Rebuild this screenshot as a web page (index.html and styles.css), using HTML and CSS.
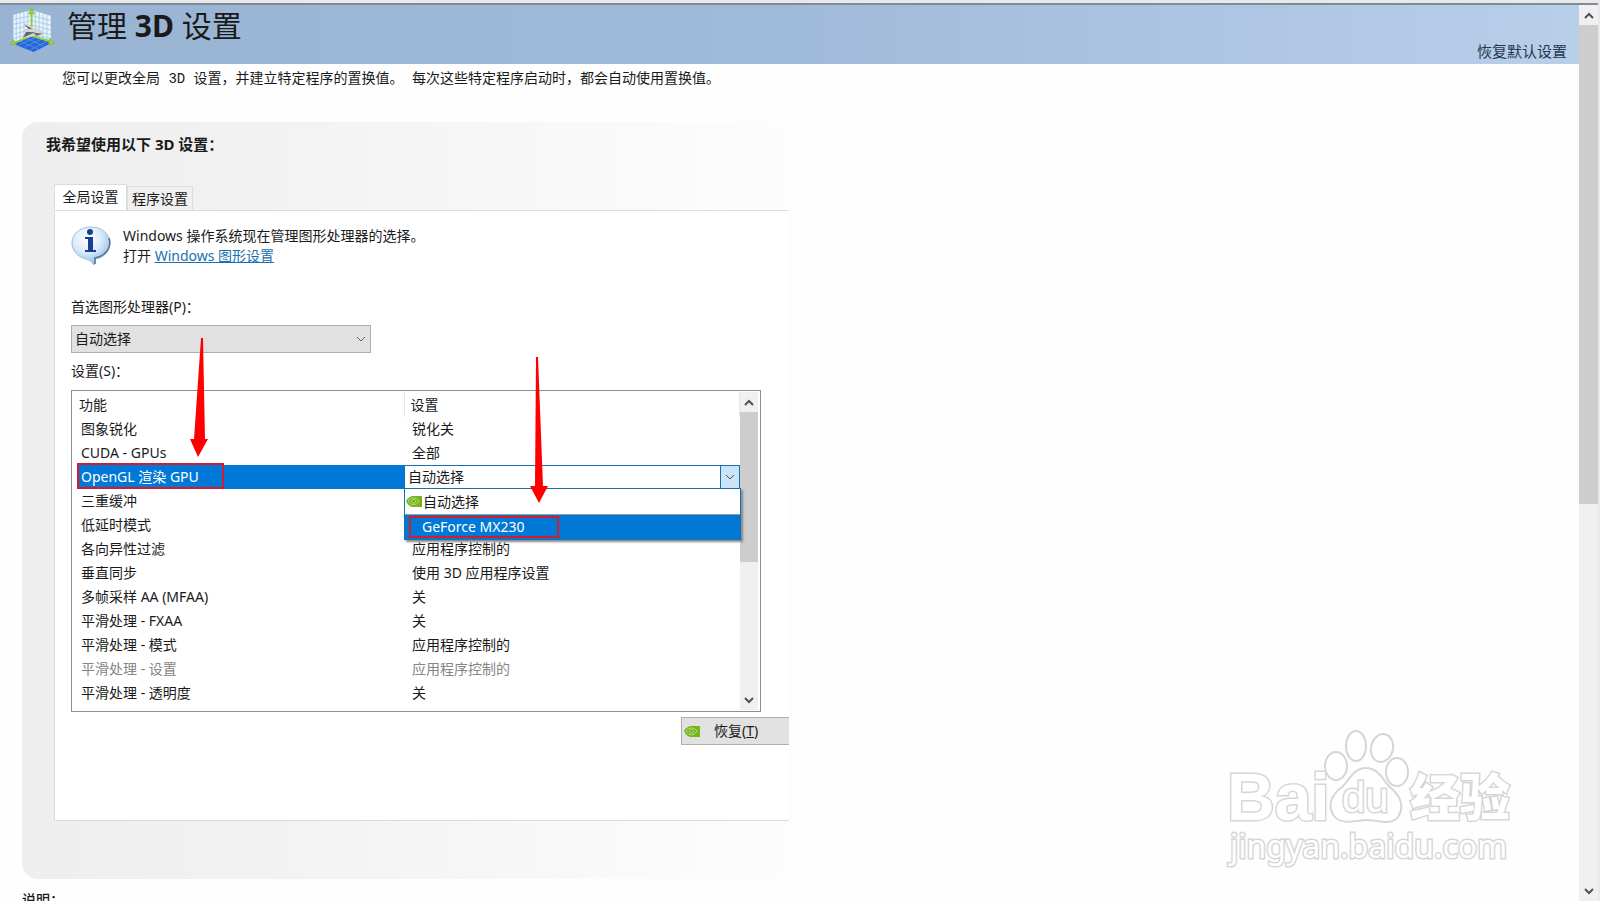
FILE: index.html
```
<!DOCTYPE html>

<html lang="zh-CN">
  <head>
    <meta charset="UTF-8" />
    <meta name="viewport" content="width=device-width, initial-scale=1.0" />
    <title>管理 3D 设置</title>

    <link rel="stylesheet" href="styles.css">
  </head>

  <body>
    <div class="window">
      <div class="page">
        <header class="header">
          <svg class="header__icon" viewBox="0 0 48 46" aria-hidden="true">
            <path d="M3 7 L22 2 V31 L3 36z M22 2 L42 8 V36 L22 31z" fill="#e9f3fb" />
            <path d="M6 6v29M10 5v29M14 4v29M18 3v29M26 3v29M30 4v29M34 6v29M38 7v29M3 12l19-4 20 5M3 17l19-4 20 5M3 22l19-4 20 5M3 27l19-4 20 5M3 32l19-5 20 5" fill="none" stroke="#a9cde6" />
            <path d="M2 37 L22 28 L44 36 L24 46z" fill="#2468d8" />
            <path d="M8 39l20-9M14 41l20-9M20 44l18-9M9 34l20 9M15 31l20 9" stroke="#4f8cea" />
            <path d="M22 30V4M22 29L3 37M22 29l20 6" fill="none" stroke="#8fce3c" stroke-width="2" />
            <path d="M22 0l3 6h-6zM0 38l3-5 3 5zM41 32l5 5-6 1z" fill="#9bd62f" stroke="#7fb84a" />
            <path d="M12 14l12 7c6 0 9 3 11 6l-9 2-15 3 7-6-6-4h6z" fill="#d0d4d8" />
            <path d="M16 25l10 0-13 6zM24 26l10 1-7 2zM14 17l9 5-4 0z" fill="#63686d" />
          </svg>
          <h1 class="header__title">管理 <b>3D</b> 设置</h1>
          <a class="header__restore" href="#restore">恢复默认设置</a>
        </header>

        <p class="intro">您可以更改全局 3D 设置，并建立特定程序的置换值。 每次这些特定程序启动时，都会自动使用置换值。</p>

        <main class="group">
          <h2 class="group__title">我希望使用以下 3D 设置：</h2>

          <div class="tabs" role="tablist">
            <button class="tab tab--active" role="tab" aria-selected="true">全局设置</button>
            <button class="tab" role="tab" aria-selected="false">程序设置</button>
          </div>

          <section class="panel">
            <div class="notice">
              <svg class="notice__icon" viewBox="0 0 40 40" aria-hidden="true">
                <defs>
                  <radialGradient id="bubble" cx="0.4" cy="0.3" r="0.75">
                    <stop offset="0" stop-color="#fff" />
                    <stop offset="0.5" stop-color="#d9ebfb" />
                    <stop offset="1" stop-color="#86b4e3" />
                  </radialGradient>
                </defs>
                <path d="M20 1C9 1 1 8 1 17c0 8 6 14 14 16 4 1 6 3 8 6 1-2 1-4 1-6 9-1 15-8 15-16C39 8 31 1 20 1z" fill="url(#bubble)" stroke="#a9bdd2" />
                <path d="M38 12c3 9-3 18-14 20v6" fill="none" stroke="#53718f" stroke-width="1.5" />
                <circle cx="19" cy="6" r="3" fill="#153f91" />
                <path d="M14 11h8v13h3v2H14v-2h3V13h-3z" fill="#153f91" />
              </svg>
              <p class="notice__text">
                Windows 操作系统现在管理图形处理器的选择。<br />
                打开 <a class="link" href="#graphics">Windows 图形设置</a>
              </p>
            </div>

            <label class="label" for="gpu">首选图形处理器(P)：</label>
            <div class="select-box">
              <select id="gpu" class="select">
                <option>自动选择</option>
              </select>
              <svg class="select-box__arrow" viewBox="0 0 10 6" aria-hidden="true"><path d="M1 1l4 4 4-4" /></svg>
            </div>

            <div class="label label--list" id="features-label">设置(S)：</div>
            <div class="list">
              <table class="features" aria-labelledby="features-label">
                <thead>
                  <tr><th>功能</th><th>设置</th></tr>
                </thead>
                <tbody>
                  <tr><td>图象锐化</td><td>锐化关</td></tr>
                  <tr><td>CUDA - GPUs</td><td>全部</td></tr>
                  <tr class="features__selected">
                    <td><label for="opengl">OpenGL 渲染 GPU</label><span class="mark mark--feature"></span></td>
                    <td>
                      <div class="combo">
                        <select id="opengl" class="combo__select">
                          <option>自动选择</option>
                          <option>GeForce MX230</option>
                        </select>
                        <span class="combo__arrow">
                          <svg viewBox="0 0 10 6" aria-hidden="true"><path d="M1 1l4 4 4-4" /></svg>
                        </span>
                        <ul class="menu" role="listbox" aria-label="OpenGL 渲染 GPU">
                          <li class="menu__item" role="option">
                            <svg class="nv" viewBox="0 0 16 11" aria-hidden="true">
                              <path d="M6 0h10v11H6C3 10 1 8 0 5 1 3 3 1 6 0z" fill="#76b51b" />
                              <path d="M2 5c3-4 8-4 11 0-3 5-8 5-11 0zM5 5c1-2 4-2 5 0-1 3-4 3-5 0z" fill="none" stroke="#b5da80" />
                            </svg>
                            自动选择
                          </li>
                          <li class="menu__item menu__item--active" role="option" aria-selected="true">
                            GeForce MX230
                            <span class="mark mark--option"></span>
                          </li>
                        </ul>
                      </div>
                    </td>
                  </tr>
                  <tr><td>三重缓冲</td><td></td></tr>
                  <tr><td>低延时模式</td><td></td></tr>
                  <tr><td>各向异性过滤</td><td>应用程序控制的</td></tr>
                  <tr><td>垂直同步</td><td>使用 3D 应用程序设置</td></tr>
                  <tr><td>多帧采样 AA (MFAA)</td><td>关</td></tr>
                  <tr><td>平滑处理 - FXAA</td><td>关</td></tr>
                  <tr><td>平滑处理 - 模式</td><td>应用程序控制的</td></tr>
                  <tr class="features__disabled"><td>平滑处理 - 设置</td><td>应用程序控制的</td></tr>
                  <tr><td>平滑处理 - 透明度</td><td>关</td></tr>
                </tbody>
              </table>
              <div class="scrollbar">
                <button class="scrollbar__button" aria-label="向上"><svg viewBox="0 0 10 7"><path d="M1 6l4-4 4 4" /></svg></button>
                <div class="scrollbar__track"><div class="scrollbar__thumb scrollbar__thumb--list"></div></div>
                <button class="scrollbar__button" aria-label="向下"><svg viewBox="0 0 10 7"><path d="M1 1l4 4 4-4" /></svg></button>
              </div>
            </div>

            <button class="restore">
              <svg class="nv" viewBox="0 0 16 11" aria-hidden="true">
                <path d="M6 0h10v11H6C3 10 1 8 0 5 1 3 3 1 6 0z" fill="#76b51b" />
                <path d="M2 5c3-4 8-4 11 0-3 5-8 5-11 0zM5 5c1-2 4-2 5 0-1 3-4 3-5 0z" fill="none" stroke="#b5da80" />
              </svg>
              <span>恢复(<u>T</u>)</span>
            </button>

            <svg class="arrows" viewBox="0 0 735 611" aria-hidden="true">
              <path d="M146 127h2l2 101h3l-10 18-8-18h4z" />
              <path d="M481 146h2l5 129h5l-9 17-9-17h5z" />
            </svg>
          </section>
        </main>

        <h2 class="description">说明：</h2>

        <svg class="watermark" viewBox="0 0 290 140" role="img" aria-label="Baidu 经验">
          <text class="watermark__latin" x="0" y="91">Bai</text>
          <ellipse cx="109" cy="37" rx="11" ry="14" />
          <ellipse cx="129" cy="17" rx="10" ry="15" />
          <ellipse cx="155" cy="19" rx="11" ry="14" transform="rotate(12 155 19)" />
          <ellipse cx="170" cy="43" rx="11" ry="14" />
          <path d="M139 39c-13 0-17 13-24 19-11 8-15 19-8 29 8 10 22 4 33 4s24 6 31-3c7-11 2-21-7-29-8-7-12-20-25-20z" />
          <text class="watermark__du" x="115" y="83">du</text>
          <text class="watermark__cjk" x="183" y="87">经验</text>
          <text class="watermark__url" x="3" y="129">jingyan.baidu.com</text>
        </svg>
      </div>

      <div class="scrollbar scrollbar--page">
        <button class="scrollbar__button" aria-label="向上"><svg viewBox="0 0 10 7"><path d="M1 6l4-4 4 4" /></svg></button>
        <div class="scrollbar__track"><div class="scrollbar__thumb scrollbar__thumb--page"></div></div>
        <button class="scrollbar__button" aria-label="向下"><svg viewBox="0 0 10 7"><path d="M1 1l4 4 4-4" /></svg></button>
      </div>
    </div>
  </body>
</html>
```

FILE: styles.css
```
:root {
  --color-main: #1a1a1a;
  --color-disabled: #858585;
  --color-select: #0078d7;
  --color-link: #1a70b0;
  --color-mark: #d01c2c;
  --color-arrow: #f00;
  --color-line: #dcdcdc;
  --color-track: #f0f0f0;
  --color-thumb: #cdcdcd;

  --font-ui: "Noto Sans", "Noto Sans CJK SC", sans-serif;
  --font-song: "Liberation Mono", "Noto Sans CJK SC", monospace;
}

* {
  box-sizing: border-box;
  margin: 0;
  padding: 0;
}

body {
  background-color: #fefefe;
  color: var(--color-main);
  font-family: var(--font-ui);
  font-size: 14px;
  line-height: 20px;
}

button,
select {
  font: inherit;
  color: inherit;
  border-radius: 0;
}

.window {
  display: flex;
  height: 100vh;
  overflow: hidden;
  border-top: 3px solid #e9e9e9;
  border-right: 2px solid #e9e9e9;
}

.page {
  flex: 1;
  min-width: 0;
  position: relative;
  overflow: hidden;
}

/* header */

.header {
  display: flex;
  align-items: flex-start;
  height: 61px;
  padding: 3px 12px 0 10px;
  border-top: 2px solid #7f8b99;
  background: linear-gradient(to right, #99b3d2, #a0bad9 50%, #b8cfea);
}

.header__icon {
  width: 47px;
  height: 44px;
}

.header__title {
  flex: 1;
  margin-left: 10px;
  font-size: 30px;
  font-weight: 400;
  line-height: 36px;
}

.header__restore {
  align-self: flex-end;
  margin-bottom: 3px;
  color: #26384e;
  font-size: 15px;
  text-decoration: none;
}

.intro {
  padding: 5px 0 0 62px;
  font-family: var(--font-song);
}

/* settings group */

.group {
  max-width: 808px;
  margin: 33px 0 0 22px;
  padding: 12px 0 58px 32px;
  border-radius: 16px;
  background: linear-gradient(to right, #eee, #f2f2f2 30%, #fefefe);
}

.group__title {
  margin-left: -8px;
  font-size: 15px;
  font-weight: 700;
}

.tabs {
  display: flex;
  align-items: flex-end;
  margin-top: 30px;
}

.tab {
  height: 24px;
  padding: 0 4px;
  border: 1px solid var(--color-line);
  border-bottom: none;
  background-color: var(--color-track);
}

.tab--active {
  position: relative;
  height: 27px;
  width: 73px;
  margin-bottom: -1px;
  padding-bottom: 3px;
  background-color: #fff;
}

.panel {
  position: relative;
  max-width: 735px;
  padding: 15px 0 75px 16px;
  border: 1px solid var(--color-line);
  border-right: none;
  background-color: #fff;
}

.notice {
  display: flex;
  gap: 12px;
}

.notice__icon {
  width: 40px;
  height: 40px;
}

.link {
  color: var(--color-link);
}

.label {
  display: block;
  margin-top: 31px;
}

.select-box {
  position: relative;
  width: 300px;
  margin-top: 8px;
}

.select {
  display: block;
  width: 100%;
  height: 28px;
  padding: 0 3px;
  border: 1px solid #adadad;
  background-color: #e1e1e1;
  appearance: none;
}

.select-box__arrow {
  position: absolute;
  top: 11px;
  right: 5px;
  width: 10px;
  height: 6px;
  fill: none;
  stroke: #606060;
}

.label--list {
  margin-top: 8px;
}

.list {
  display: flex;
  width: 690px;
  height: 322px;
  margin-top: 9px;
  padding: 1px 2px 1px 5px;
  border: 1px solid #8b8f94;
}

.features {
  flex: 1;
  align-self: flex-start;
  table-layout: fixed;
  border-collapse: collapse;
  text-align: left;
}

.features th {
  height: 25px;
  padding: 0 0 0 2px;
  border-right: 1px solid #e5e5e5;
  font-weight: 400;
}

.features th:first-child {
  width: 327px;
}

.features th + th {
  padding-left: 6px;
}

.features td {
  position: relative;
  height: 24px;
  padding-left: 4px;
}

.features td + td {
  padding-left: 8px;
}

.features__selected td {
  background-color: var(--color-select);
  color: #fff;
}

.features__selected td + td {
  padding: 0;
}

.features__disabled {
  color: var(--color-disabled);
}

.combo {
  display: flex;
  position: relative;
  height: 24px;
  border: 1px solid #1a6fae;
  background-color: #fff;
  color: var(--color-main);
}

.combo__select {
  flex: 1;
  padding-left: 3px;
  border: none;
  background-color: #fff;
  appearance: none;
}

.combo__arrow {
  display: flex;
  align-items: center;
  justify-content: center;
  width: 19px;
  border-left: 1px solid #1a6fae;
  background-color: #cce4f7;
}

.combo__arrow svg {
  width: 10px;
  height: 6px;
  fill: none;
  stroke: #505050;
}

.menu {
  position: absolute;
  z-index: 1;
  top: 22px;
  left: -1px;
  right: -2px;
  border: 1px solid #1a6fae;
  background-color: #fff;
  box-shadow: 2px 2px 2px #888;
  list-style: none;
}

.menu__item {
  display: flex;
  align-items: center;
  gap: 1px;
  height: 25px;
  padding-left: 1px;
}

.menu__item--active {
  position: relative;
  padding-left: 17px;
  border-top: 1px solid #999;
  background-color: var(--color-select);
  color: #fff;
}

.nv {
  width: 16px;
  height: 11px;
}

/* red annotations */

.mark {
  position: absolute;
  border: 2px solid var(--color-mark);
}

.mark--feature {
  top: -2px;
  left: 0;
  width: 147px;
  height: 26px;
}

.mark--option {
  top: 1px;
  left: 4px;
  width: 150px;
  height: 22px;
}

.arrows {
  position: absolute;
  z-index: 2;
  top: 0;
  left: 0;
  width: 735px;
  height: 611px;
  fill: var(--color-arrow);
  pointer-events: none;
}

.restore {
  display: flex;
  align-items: center;
  gap: 14px;
  width: 108px;
  height: 28px;
  margin: 5px 0 0 auto;
  padding-left: 2px;
  border: 1px solid #adadad;
  border-right: none;
  background-color: #e1e1e1;
}

.description {
  margin: 12px 0 0 22px;
  font-family: var(--font-song);
  font-size: 14px;
  font-weight: 500;
}

/* scrollbars */

.scrollbar {
  display: flex;
  flex-direction: column;
  width: 18px;
  background-color: var(--color-track);
}

.scrollbar--page {
  width: 19px;
  border-top: 2px solid #7f8b99;
}

.scrollbar__button {
  display: flex;
  align-items: center;
  justify-content: center;
  height: 20px;
  border: none;
  background-color: transparent;
}

.scrollbar__button svg {
  width: 10px;
  height: 7px;
  fill: none;
  stroke: #505050;
  stroke-width: 2;
}

.scrollbar__track {
  flex: 1;
}

.scrollbar__thumb {
  background-color: var(--color-thumb);
}

.scrollbar__thumb--list {
  height: 54%;
}

.scrollbar__thumb--page {
  height: 56%;
}

/* watermark */

.watermark {
  position: absolute;
  right: 62px;
  bottom: 32px;
  width: 290px;
  height: 140px;
  overflow: visible;
  fill: #fff;
  stroke: #d6d6d6;
  stroke-width: 2;
  font-family: "Liberation Sans", "Noto Sans CJK SC", sans-serif;
}

.watermark text {
  paint-order: stroke;
  stroke-width: 3;
}

.watermark__latin {
  font-size: 66px;
  font-weight: 700;
}

.watermark__du {
  font-size: 42px;
}

.watermark__cjk {
  font-size: 50px;
  font-weight: 900;
}

.watermark__url {
  font-family: "Noto Sans", sans-serif;
  font-size: 32px;
}
```
